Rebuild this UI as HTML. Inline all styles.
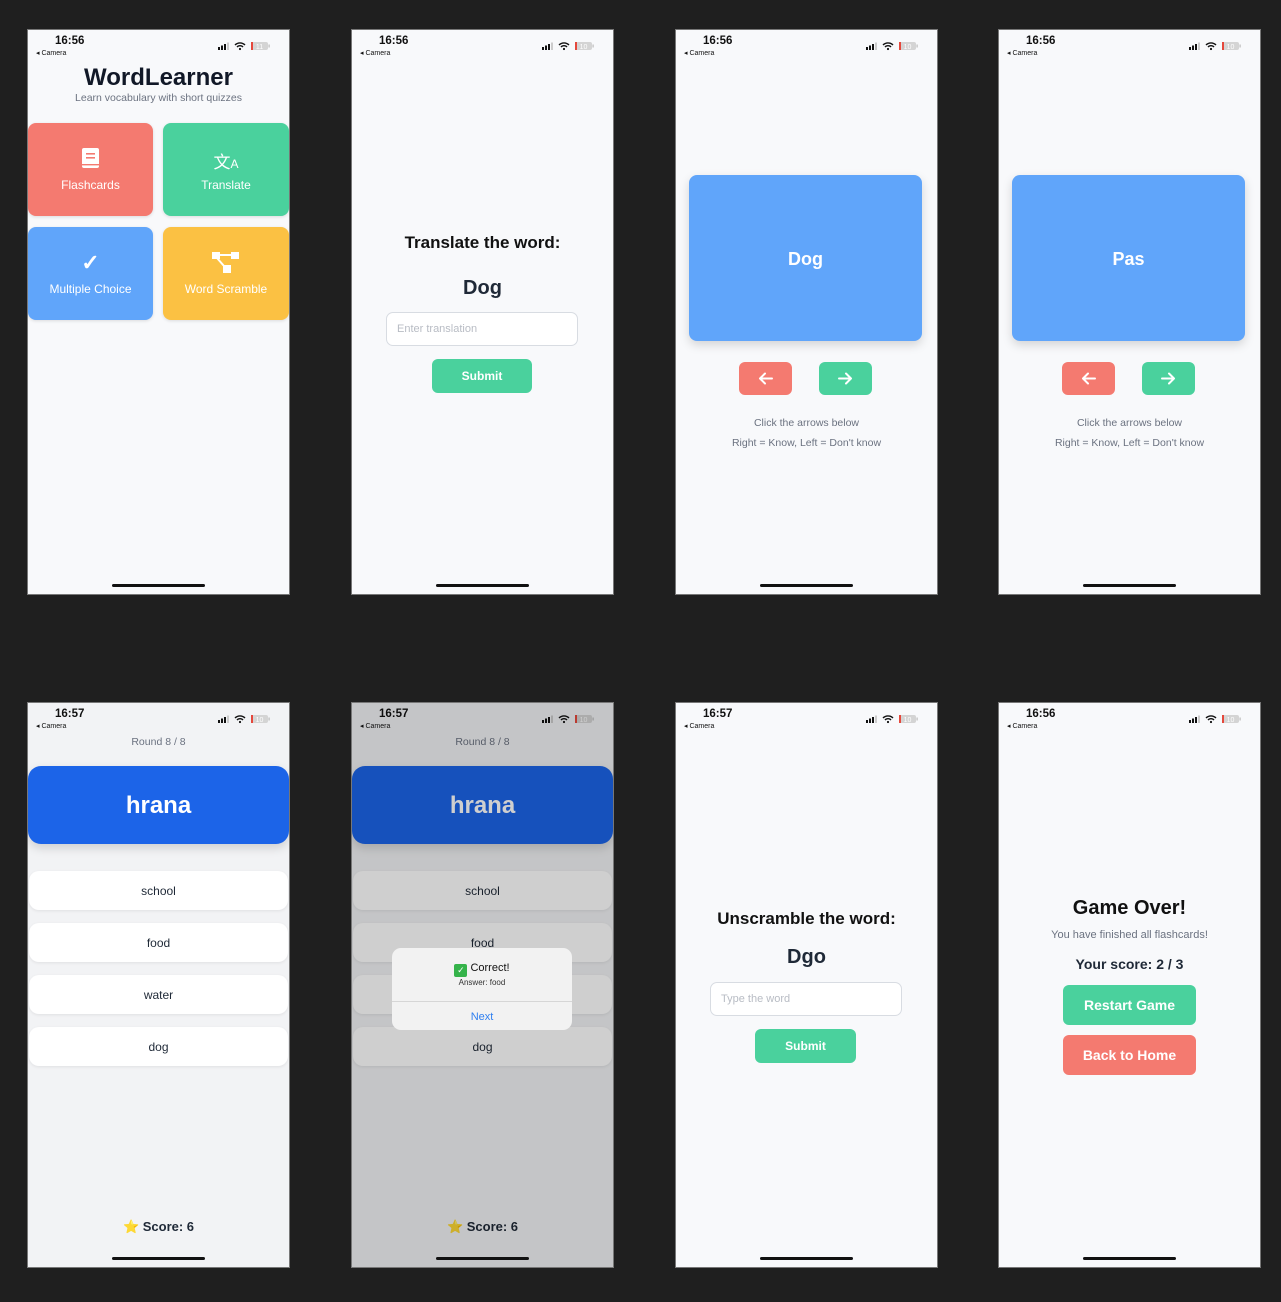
<!DOCTYPE html>
<html><head><meta charset="utf-8">
<style>
*{box-sizing:border-box;margin:0;padding:0}
html,body{width:1281px;height:1302px;background:#1f1f1f;overflow:hidden;font-family:"Liberation Sans",sans-serif}
.ph{position:absolute;width:261px;height:564px;background:#f8f9fb;overflow:hidden;outline:1px solid #777}
.a{position:absolute}
.c{position:absolute;left:0;width:261px;text-align:center}
.time{position:absolute;left:27px;top:5px;font-size:11.5px;font-weight:bold;color:#111}
.cam{position:absolute;left:8px;top:19px;font-size:7px;color:#111}
.st{position:absolute;left:190px;top:11px;width:55px;height:10px}
.home{position:absolute;left:84px;top:554px;width:93px;height:3px;border-radius:2px;background:#111}
.card{position:absolute;width:125px;height:93px;border-radius:8px;color:#fff;font-size:12px;text-align:center;box-shadow:0 1px 3px rgba(0,0,0,.12)}
.btn{position:absolute;border-radius:6px;color:#fff;font-weight:bold;text-align:center}
.inp{position:absolute;border:1px solid #d8dce2;border-radius:7px;background:#fff;color:#b8bcc4;font-size:11px;padding-left:10px}
.opt{position:absolute;left:1px;width:259px;height:39px;border-radius:10px;background:#fff;box-shadow:0 1px 3px rgba(0,0,0,.08);text-align:center;line-height:41px;font-size:12px;color:#1f2937}
.gray{color:#6b7280}
</style></head><body>
<svg width="0" height="0" style="position:absolute"><defs><symbol id="sb" viewBox="0 0 55 10"><rect x="0" y="6" width="2" height="3" fill="#111"/><rect x="3" y="4.5" width="2" height="4.5" fill="#111"/><rect x="6" y="3" width="2" height="6" fill="#111"/><rect x="9" y="1.5" width="2" height="7.5" fill="#ccc"/><path d="M17 4a7 7 0 0 1 10 0M19 6a4 4 0 0 1 6 0" stroke="#111" stroke-width="1.4" fill="none"/><circle cx="22" cy="8" r="1.1" fill="#111"/><rect x="33" y="1" width="17" height="8" rx="2" fill="#d4d4d4"/><rect x="33" y="1" width="2" height="8" fill="#e5483c"/><rect x="50.5" y="3.5" width="1.2" height="3" fill="#bbb"/></symbol></defs></svg>

<div class="ph" style="left:28px;top:30px">
 <div class="time">16:56</div><div class="cam">◂ Camera</div>
 <svg class="st" viewBox="0 0 55 10"><use href="#sb"/><text x="41.5" y="8" font-size="7" fill="#fff" text-anchor="middle" font-family="Liberation Sans">11</text></svg>
 <div class="c" style="top:34px;font-size:24px;font-weight:bold;color:#111827">WordLearner</div>
 <div class="c gray" style="top:62px;font-size:10.5px">Learn vocabulary with short quizzes</div>
 <div class="card" style="left:0;top:93px;background:#f47a70"><svg class="a" style="left:53px;top:25px" width="19" height="22" viewBox="0 0 19 22"><rect x="1" y="0" width="17" height="20" rx="2" fill="#fff"/><rect x="5" y="5" width="9" height="1.6" fill="#f47a70"/><rect x="5" y="9" width="9" height="1.6" fill="#f47a70"/><rect x="1" y="16" width="17" height="1.4" fill="#f47a70"/></svg><div class="a" style="left:0;width:125px;top:55px">Flashcards</div></div>
 <div class="card" style="left:135px;top:93px;width:126px;background:#4ad19d"><div class="a" style="left:0;width:126px;top:25px;font-size:17px">文<span style="font-size:12px">A</span></div><div class="a" style="left:0;width:126px;top:55px">Translate</div></div>
 <div class="card" style="left:0;top:197px;background:#60a5fa"><div class="a" style="left:0;width:125px;top:23px;font-size:22px;font-weight:bold">✓</div><div class="a" style="left:0;width:125px;top:55px">Multiple Choice</div></div>
 <div class="card" style="left:135px;top:197px;width:126px;background:#fbc143"><svg class="a" style="left:49px;top:25px" width="27" height="22" viewBox="0 0 27 22"><rect x="0" y="0" width="8" height="7" fill="#fff"/><rect x="19" y="0" width="8" height="7" fill="#fff"/><rect x="11" y="13" width="8" height="8" fill="#fff"/><path d="M8 3H19M5 6L12 14" stroke="#fff" stroke-width="2"/></svg><div class="a" style="left:0;width:126px;top:55px">Word Scramble</div></div>
 <div class="home"></div>
</div>

<div class="ph" style="left:352px;top:30px">
 <div class="time">16:56</div><div class="cam">◂ Camera</div>
 <svg class="st" viewBox="0 0 55 10"><use href="#sb"/><text x="41.5" y="8" font-size="7" fill="#fff" text-anchor="middle" font-family="Liberation Sans">10</text></svg>
 <div class="c" style="top:203px;font-size:17px;font-weight:bold;color:#111">Translate the word:</div>
 <div class="c" style="top:247px;font-size:20px;font-weight:bold;color:#1f2937">Dog</div>
 <div class="inp" style="left:34px;top:282px;width:192px;height:34px;line-height:33px">Enter translation</div>
 <div class="btn" style="left:80px;top:329px;width:100px;height:34px;line-height:35px;background:#4ad19d;font-size:12px">Submit</div>
 <div class="home"></div>
</div>

<div class="ph" style="left:676px;top:30px">
 <div class="time">16:56</div><div class="cam">◂ Camera</div>
 <svg class="st" viewBox="0 0 55 10"><use href="#sb"/><text x="41.5" y="8" font-size="7" fill="#fff" text-anchor="middle" font-family="Liberation Sans">10</text></svg>
 <div class="a" style="left:13px;top:145px;width:233px;height:166px;border-radius:8px;background:#60a5fa;box-shadow:0 4px 10px rgba(0,0,0,.15);color:#fff;font-size:18px;font-weight:bold;text-align:center;line-height:168px">Dog</div>
 <div class="btn" style="left:63px;top:332px;width:53px;height:33px;background:#f47a70"><svg width="53" height="33" viewBox="0 0 53 33"><path d="M33 16.5H21M26 11.5L21 16.5L26 21.5" stroke="#fff" stroke-width="2" fill="none" stroke-linecap="round" stroke-linejoin="round"/></svg></div>
 <div class="btn" style="left:143px;top:332px;width:53px;height:33px;background:#4ad19d"><svg width="53" height="33" viewBox="0 0 53 33"><path d="M20 16.5H32M27 11.5L32 16.5L27 21.5" stroke="#fff" stroke-width="2" fill="none" stroke-linecap="round" stroke-linejoin="round"/></svg></div>
 <div class="c gray" style="top:387px;font-size:10.5px">Click the arrows below</div>
 <div class="c gray" style="top:407px;font-size:10.5px">Right = Know, Left = Don't know</div>
 <div class="home"></div>
</div>

<div class="ph" style="left:999px;top:30px">
 <div class="time">16:56</div><div class="cam">◂ Camera</div>
 <svg class="st" viewBox="0 0 55 10"><use href="#sb"/><text x="41.5" y="8" font-size="7" fill="#fff" text-anchor="middle" font-family="Liberation Sans">10</text></svg>
 <div class="a" style="left:13px;top:145px;width:233px;height:166px;border-radius:8px;background:#60a5fa;box-shadow:0 4px 10px rgba(0,0,0,.15);color:#fff;font-size:18px;font-weight:bold;text-align:center;line-height:168px">Pas</div>
 <div class="btn" style="left:63px;top:332px;width:53px;height:33px;background:#f47a70"><svg width="53" height="33" viewBox="0 0 53 33"><path d="M33 16.5H21M26 11.5L21 16.5L26 21.5" stroke="#fff" stroke-width="2" fill="none" stroke-linecap="round" stroke-linejoin="round"/></svg></div>
 <div class="btn" style="left:143px;top:332px;width:53px;height:33px;background:#4ad19d"><svg width="53" height="33" viewBox="0 0 53 33"><path d="M20 16.5H32M27 11.5L32 16.5L27 21.5" stroke="#fff" stroke-width="2" fill="none" stroke-linecap="round" stroke-linejoin="round"/></svg></div>
 <div class="c gray" style="top:387px;font-size:10.5px">Click the arrows below</div>
 <div class="c gray" style="top:407px;font-size:10.5px">Right = Know, Left = Don't know</div>
 <div class="home"></div>
</div>

<div class="ph" style="left:28px;top:703px;background:#f2f3f5">
 <div class="time">16:57</div><div class="cam">◂ Camera</div>
 <svg class="st" viewBox="0 0 55 10"><use href="#sb"/><text x="41.5" y="8" font-size="7" fill="#fff" text-anchor="middle" font-family="Liberation Sans">10</text></svg>
 <div class="c gray" style="top:33px;font-size:10.5px">Round 8 / 8</div>
 <div class="a" style="left:0;top:63px;width:261px;height:78px;border-radius:13px;background:#1c64e8;box-shadow:0 4px 10px rgba(0,0,0,.15);color:#fff;font-size:24px;font-weight:bold;text-align:center;line-height:80px">hrana</div>
 <div class="opt" style="top:168px">school</div>
 <div class="opt" style="top:220px">food</div>
 <div class="opt" style="top:272px">water</div>
 <div class="opt" style="top:324px">dog</div>
 <div class="c" style="top:516px;font-size:13px;font-weight:bold;color:#1f2937"><span style="color:#f6c744">⭐</span> Score: 6</div>
 <div class="home"></div>
</div>

<div class="ph" style="left:352px;top:703px;background:#f2f3f5">
 <div class="time">16:57</div><div class="cam">◂ Camera</div>
 <svg class="st" viewBox="0 0 55 10"><use href="#sb"/><text x="41.5" y="8" font-size="7" fill="#fff" text-anchor="middle" font-family="Liberation Sans">10</text></svg>
 <div class="c gray" style="top:33px;font-size:10.5px">Round 8 / 8</div>
 <div class="a" style="left:0;top:63px;width:261px;height:78px;border-radius:13px;background:#1c64e8;box-shadow:0 4px 10px rgba(0,0,0,.15);color:#fff;font-size:24px;font-weight:bold;text-align:center;line-height:80px">hrana</div>
 <div class="opt" style="top:168px">school</div>
 <div class="opt" style="top:220px">food</div>
 <div class="opt" style="top:272px">water</div>
 <div class="opt" style="top:324px">dog</div>
 <div class="c" style="top:516px;font-size:13px;font-weight:bold;color:#1f2937"><span style="color:#f6c744">⭐</span> Score: 6</div>
 <div class="a" style="left:0;top:0;width:261px;height:564px;background:rgba(0,0,0,.19)"></div>
 <div class="home" style="top:554px"></div>
 <div class="a" style="left:40px;top:245px;width:180px;height:82px;border-radius:9px;background:#f2f2f2">
  <div class="a" style="left:0;width:180px;top:14px;text-align:center;font-size:11px;color:#111"><span style="display:inline-block;width:13px;height:13px;background:#35b34a;border-radius:2px;color:#fff;font-size:9px;line-height:13px;vertical-align:-2px">✓</span> Correct!</div>
  <div class="a" style="left:0;width:180px;top:30px;text-align:center;font-size:8px;color:#333">Answer: food</div>
  <div class="a" style="left:0;top:53px;width:180px;height:1px;background:#d6d6d6"></div>
  <div class="a" style="left:0;width:180px;top:63px;text-align:center;font-size:11px;color:#2f7ff0">Next</div>
 </div>
</div>

<div class="ph" style="left:676px;top:703px">
 <div class="time">16:57</div><div class="cam">◂ Camera</div>
 <svg class="st" viewBox="0 0 55 10"><use href="#sb"/><text x="41.5" y="8" font-size="7" fill="#fff" text-anchor="middle" font-family="Liberation Sans">10</text></svg>
 <div class="c" style="top:206px;font-size:17px;font-weight:bold;color:#111">Unscramble the word:</div>
 <div class="c" style="top:243px;font-size:20px;font-weight:bold;color:#1f2937">Dgo</div>
 <div class="inp" style="left:34px;top:279px;width:192px;height:34px;line-height:33px">Type the word</div>
 <div class="btn" style="left:79px;top:326px;width:101px;height:34px;line-height:35px;background:#4ad19d;font-size:12px">Submit</div>
 <div class="home"></div>
</div>

<div class="ph" style="left:999px;top:703px">
 <div class="time">16:56</div><div class="cam">◂ Camera</div>
 <svg class="st" viewBox="0 0 55 10"><use href="#sb"/><text x="41.5" y="8" font-size="7" fill="#fff" text-anchor="middle" font-family="Liberation Sans">10</text></svg>
 <div class="c" style="top:194px;font-size:20px;font-weight:bold;color:#111">Game Over!</div>
 <div class="c gray" style="top:226px;font-size:11px">You have finished all flashcards!</div>
 <div class="c" style="top:253px;font-size:14px;font-weight:bold;color:#1f2937">Your score: 2 / 3</div>
 <div class="btn" style="left:64px;top:282px;width:133px;height:40px;line-height:41px;background:#4ad19d;font-size:14px">Restart Game</div>
 <div class="btn" style="left:64px;top:332px;width:133px;height:40px;line-height:41px;background:#f47a70;font-size:14px">Back to Home</div>
 <div class="home"></div>
</div>

</body></html>
